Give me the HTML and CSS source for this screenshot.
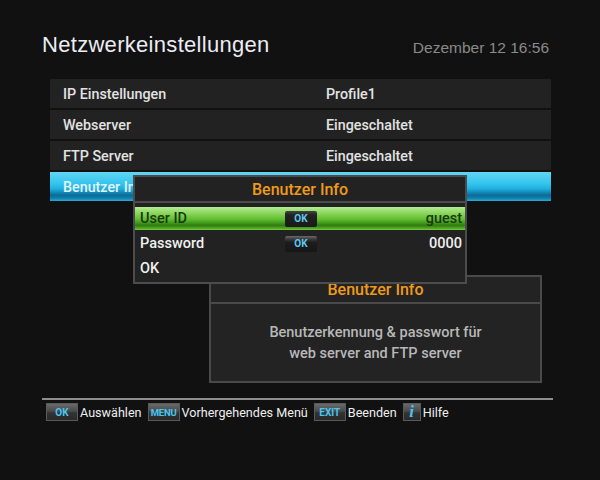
FILE: index.html
```html
<!DOCTYPE html>
<html lang="de">
<head>
<meta charset="utf-8">
<title>Netzwerkeinstellungen</title>
<link rel="stylesheet" href="styles.css">
</head>
<body>
<div class="screen">
  <header class="top">
    <h1 class="title">Netzwerkeinstellungen</h1>
    <div class="date">Dezember 12 16:56</div>
  </header>

  <ul class="menu">
    <li class="row"><span class="label">IP Einstellungen</span><span class="value">Profile1</span></li>
    <li class="row"><span class="label">Webserver</span><span class="value">Eingeschaltet</span></li>
    <li class="row"><span class="label">FTP Server</span><span class="value">Eingeschaltet</span></li>
    <li class="row selected"><span class="label">Benutzer Info</span><span class="value"></span></li>
  </ul>

  <section class="help">
    <div class="help-head">Benutzer Info</div>
    <div class="help-body">Benutzerkennung &amp; passwort für<br>web server and FTP server</div>
  </section>

  <footer class="foot">
    <span class="key">OK</span><span class="klabel">Auswählen</span>
    <span class="key key-menu">MENU</span><span class="klabel">Vorhergehendes Menü</span>
    <span class="key">EXIT</span><span class="klabel">Beenden</span>
    <span class="key key-i">i</span><span class="klabel">Hilfe</span>
  </footer>

  <div class="dialog">
    <div class="dlg-head">Benutzer Info</div>
    <div class="dlg-rows">
      <div class="drow active"><span class="dlabel">User ID</span><span class="okbtn">OK</span><span class="dval">guest</span></div>
      <div class="drow"><span class="dlabel">Password</span><span class="okbtn">OK</span><span class="dval">0000</span></div>
      <div class="drow"><span class="dlabel">OK</span><span></span><span class="dval"></span></div>
    </div>
  </div>
</div>
</body>
</html>
```
FILE: styles.css
```css
* { box-sizing: border-box; }
html, body { margin: 0; padding: 0; }
body {
  width: 600px;
  height: 480px;
  background: #111111;
  font-family: Roboto, "Liberation Sans", Arial, sans-serif;
  font-weight: 500;
  color: #e6e6e6;
  overflow: hidden;
}
.screen {
  position: relative;
  width: 600px;
  height: 480px;
  padding-top: 32px;
}
.top {
  display: flex;
  justify-content: space-between;
  align-items: flex-end;
  padding: 0 51px 0 42px;
  height: 26px;
}
.title {
  margin: 0;
  font-family: "Liberation Sans", Arial, sans-serif;
  font-size: 22px;
  line-height: 26px;
  font-weight: normal;
  color: #ececf4;
  letter-spacing: 0.3px;
}
.date {
  font-family: "Liberation Sans", Arial, sans-serif;
  font-weight: normal;
  font-size: 15.5px;
  line-height: 20px;
  color: #8a8a8a;
}
.menu {
  list-style: none;
  margin: 21px 49px 0 50px;
  padding: 0;
  display: flex;
  flex-direction: column;
  gap: 2px;
}
.row {
  display: flex;
  align-items: center;
  height: 29px;
  background: #222222;
  font-size: 14.3px;
  padding-left: 13px;
  color: #e2e2e2;
}
.label { width: 263px; }
.row.selected {
  background: linear-gradient(to bottom, #62d6f2 0%, #34c4ee 40%, #1fb0e0 58%, #0b6b96 80%, #0e80ac 90%, #2aaad6 100%);
  color: #e4f4ff;
}
.help {
  margin: 74px 58px 0 209px;
  width: 333px;
  height: 108px;
  border: 2px solid #4a4a4a;
  background: #232323;
  display: flex;
  flex-direction: column;
}
.help-head {
  height: 27px;
  border-bottom: 2px solid #4a4a4a;
  color: #f09a1a;
  font-size: 16px;
  display: flex;
  align-items: center;
  justify-content: center;
}
.help-body {
  flex: 1;
  display: flex;
  align-items: center;
  justify-content: center;
  text-align: center;
  color: #b8b8b8;
  font-size: 14.5px;
  line-height: 21px;
}
.foot {
  margin: 15px 47px 0 42px;
  border-top: 2px solid #8e8e8e;
  padding: 3px 0 0 4px;
  display: flex;
  align-items: center;
  font-size: 12.6px;
  font-weight: 400;
  color: #eeeeee;
}
.key {
  display: inline-flex;
  align-items: center;
  justify-content: center;
  height: 18px;
  min-width: 32px;
  padding: 0 3px;
  background: linear-gradient(to bottom, #6a6a6a 0%, #4a4a4a 45%, #333333 55%, #2a2a2a 100%);
  border: 1px solid #5a5a5a;
  color: #48c6f2;
  font-size: 10px;
  font-weight: bold;
  margin-right: 2px;
}
.key-menu {
  padding: 0 1px;
  font-size: 9.5px;
  letter-spacing: -0.2px;
}
.key-i {
  min-width: 18px;
  font-family: "Liberation Serif", serif;
  font-style: italic;
  font-size: 17px;
  font-weight: bold;
}
.klabel { margin-right: 6px; }
.dialog {
  position: absolute;
  left: 133px;
  top: 175px;
  width: 334px;
  height: 109px;
  background: #222222;
  border: 2px solid #4c4c4c;
  display: flex;
  flex-direction: column;
}
.dlg-head {
  height: 26px;
  border-bottom: 2px solid #4c4c4c;
  color: #f09a1a;
  font-size: 16px;
  display: flex;
  align-items: center;
  justify-content: center;
}
.dlg-rows {
  padding-top: 4px;
  display: flex;
  flex-direction: column;
  gap: 2px;
}
.drow {
  height: 23px;
  display: grid;
  grid-template-columns: 1fr 32px 1fr;
  align-items: center;
  padding: 0 3px 0 5px;
  font-size: 14.5px;
  color: #f0f0f0;
}
.drow.active {
  background: linear-gradient(to bottom, #b4ec94 0%, #86d456 30%, #5cbc2c 55%, #2f7c12 80%, #4ea422 92%, #7ccc40 100%);
  color: #1c3612;
}
.dval { text-align: right; }
.okbtn {
  height: 16px;
  display: flex;
  align-items: center;
  justify-content: center;
  background: linear-gradient(to bottom, #6a6a6a 0%, #3a3a3a 20%, #1c1c1c 40%, #161616 100%);
  color: #5ccaf0;
  font-size: 10px;
  font-weight: bold;
  border-radius: 2px;
}
.drow.active .okbtn {
  background: linear-gradient(to bottom, #444 0%, #222 25%, #1a1a1a 100%);
}
```
